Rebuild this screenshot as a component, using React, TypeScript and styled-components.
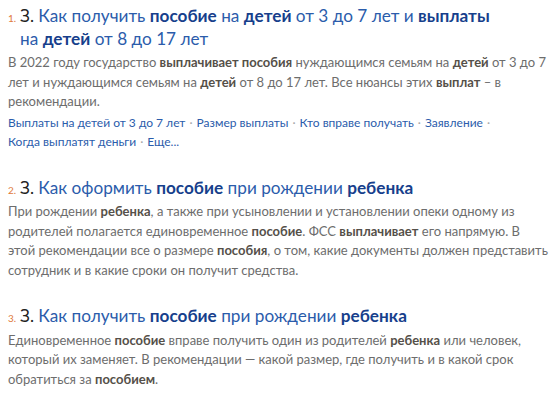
import styled, { createGlobalStyle } from 'styled-components';

const GlobalStyle = createGlobalStyle`
    body {
        margin: 0;
        background: #ffffff;
        font-family: Lato, 'Open Sans', sans-serif;
    }
`;

type Result = {
    title: React.ReactNode;
    text: React.ReactNode;
    links?: string[];
};

const results: Result[] = [
    {
        title: (
            <>
                Как получить <b>пособие</b> на <b>детей</b> от 3 до 7 лет и <b>выплаты</b>
                <br />
                на <b>детей</b> от 8 до 17 лет
            </>
        ),
        text: (
            <>
                В 2022 году государство <b>выплачивает пособия</b> нуждающимся семьям на <b>детей</b> от 3 до 7
                <br />
                лет и нуждающимся семьям на <b>детей</b> от 8 до 17 лет. Все нюансы этих <b>выплат</b> – в
                <br />
                рекомендации.
            </>
        ),
        links: ['Выплаты на детей от 3 до 7 лет', 'Размер выплаты', 'Кто вправе получать', 'Заявление', 'Когда выплатят деньги', 'Еще...'],
    },
    {
        title: (
            <>
                Как оформить <b>пособие</b> при рождении <b>ребенка</b>
            </>
        ),
        text: (
            <>
                При рождении <b>ребенка</b>, а также при усыновлении и установлении опеки одному из
                <br />
                родителей полагается единовременное <b>пособие</b>. ФСС <b>выплачивает</b> его напрямую. В
                <br />
                этой рекомендации все о размере <b>пособия</b>, о том, какие документы должен представить
                <br />
                сотрудник и в какие сроки он получит средства.
            </>
        ),
    },
    {
        title: (
            <>
                Как получить <b>пособие</b> при рождении <b>ребенка</b>
            </>
        ),
        text: (
            <>
                Единовременное <b>пособие</b> вправе получить один из родителей <b>ребенка</b> или человек,
                <br />
                который их заменяет. В рекомендации — какой размер, где получить и в какой срок
                <br />
                обратиться за <b>пособием</b>.
            </>
        ),
    },
];

function App() {
    return (
        <>
            <GlobalStyle />
            <List>
                {results.map((item, i) => (
                    <Item key={i}>
                        <Header>
                            <Num>{i + 1}.</Num>
                            <Title>
                                <Prefix>З. </Prefix>
                                {item.title}
                            </Title>
                        </Header>
                        <Snippet>{item.text}</Snippet>
                        {item.links && (
                            <Links>
                                {item.links.map((l, j) => (
                                    <span key={j}>
                                        <LinkText>{l}</LinkText>
                                        {j < item.links!.length - 1 && <Dot>·</Dot>}
                                        {j === 3 && <br />}
                                    </span>
                                ))}
                            </Links>
                        )}
                    </Item>
                ))}
            </List>
        </>
    );
}

export default App;

const List = styled.div`
    padding: 5px 8px 0 8px;
    display: flex;
    flex-direction: column;
    gap: 25px;
`;
const Item = styled.div`
    display: flex;
    flex-direction: column;
`;
const Header = styled.div`
    display: flex;
    align-items: baseline;
    margin-bottom: 3px;
`;
const Num = styled.span`
    width: 12px;
    flex: none;
    font-size: 10px;
    color: #e0793b;
`;
const Title = styled.div`
    font-size: 17.2px;
    line-height: 22.5px;
    color: #2b5cab;
    white-space: nowrap;

    b {
        font-weight: 700;
        color: #173f8c;
    }
`;
const Prefix = styled.span`
    color: #222222;
`;
const Snippet = styled.div`
    font-size: 13px;
    line-height: 19.5px;
    color: #6d6d6d;
    white-space: nowrap;

    b {
        font-weight: 700;
        color: #555049;
    }
`;
const Links = styled.div`
    margin-top: 1px;
    font-size: 12px;
    line-height: 19.5px;
    white-space: nowrap;
`;
const LinkText = styled.span`
    color: #2b5cab;
`;
const Dot = styled.span`
    color: #a8a8a8;
    margin: 0 4px;
`;
